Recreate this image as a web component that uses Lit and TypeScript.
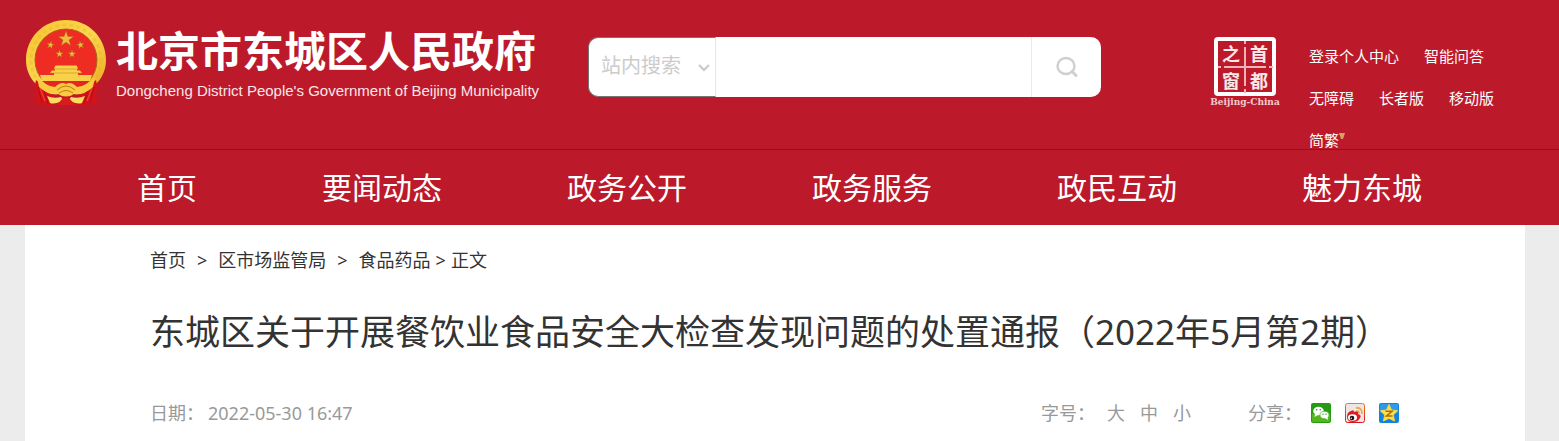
import { LitElement, html, svg, css } from "lit";
import { customElement } from "lit/decorators.js";

const star = (cx: number, cy: number, r: number, turn = 0) => {
  const pts: string[] = [];
  for (let i = 0; i < 10; i++) {
    const rad = i % 2 ? r * 0.4 : r;
    const a = ((-90 + turn + i * 36) * Math.PI) / 180;
    pts.push(`${(cx + rad * Math.cos(a)).toFixed(2)},${(cy + rad * Math.sin(a)).toFixed(2)}`);
  }
  return svg`<polygon points=${pts.join(" ")} />`;
};

@customElement("site-emblem")
export class SiteEmblem extends LitElement {
  static styles = css`
    :host { display: block; flex: none; width: 82px; height: 86px; }
    svg { display: block; width: 100%; height: 100%; }
  `;
  render() {
    return html`<svg viewBox="0 0 82 86" aria-hidden="true">
      <defs>
        <linearGradient id="gold" x1="0" y1="0" x2="1" y2="1">
          <stop offset="0" stop-color="#f6c22f" />
          <stop offset="0.5" stop-color="#fbd850" />
          <stop offset="1" stop-color="#eaa71f" />
        </linearGradient>
      </defs>
      <path d="M41 0 C64 0 81 18 81 40 C81 50 77 58 71 64 L62 74 H20 L11 64 C5 58 1 50 1 40 C1 18 18 0 41 0Z" fill="url(#gold)" />
      <circle cx="41" cy="40" r="35" fill="none" stroke="#e7a51e" stroke-width="3" stroke-dasharray="4 3" opacity="0.25" />
      <path d="M11 60 Q17 66 25 70 L32 86 Q22 87 17 84 Q12 85 9 81 L12 73 L9 70Z" fill="#d3131a" />
      <path d="M71 60 Q65 66 57 70 L50 86 Q60 87 65 84 Q70 85 73 81 L70 73 L73 70Z" fill="#d3131a" />
      <path d="M13 67 L17 83 M69 67 L65 83 M19 70 L23 84 M63 70 L59 84" stroke="#b30e18" stroke-width="1" fill="none" />
      <path d="M15 68 L20 81 M67 68 L62 81" stroke="#f03a2b" stroke-width="1.500" />
      <circle cx="41" cy="40" r="31" fill="#ee2c24" stroke="#a9641a" stroke-width="1" />
      <g fill="#edbd3b" stroke="#a4641a" stroke-width="0.4">
        ${star(41, 19, 8)} ${star(25.5, 25, 4, 12)} ${star(55.5, 25, 4, -12)}
        ${star(34.5, 34, 4)} ${star(47, 34, 4)}
      </g>
      <g fill="#f9d049">
        <path d="M30 46 L31 45.500 H51 L52 46 L53 49 H29Z" />
        <path d="M30 49 H52 V51 H30Z" />
        <path d="M27 50.500 H55 L57 53 H25Z" />
        <path d="M29 53 H53 V56 H29Z" />
        <path d="M15 55 H67 L65 61 H17Z" />
      </g>
      <path d="M29 49 H53 M25 53 H57" stroke="#c98a1f" stroke-width="0.6" />
      <path d="M17 61 H65 L54 69 H28Z" fill="#e4261f" />
      <path d="M12 57 Q20 66 30 67 Q36 61 41 64 Q46 61 52 67 Q62 66 70 57 L68 67 Q58 76 49 74 Q41 79 33 74 Q24 76 14 67Z" fill="#f8cb40" />
      <path d="M32 70 Q41 62 50 70 M34 73 Q41 68 48 73" fill="none" stroke="#bb7b1b" stroke-width="1" />
      <path d="M22 76 Q29 79 36 77 L38 80 Q30 85 25 83Z M60 76 Q53 79 46 77 L44 80 Q52 85 57 83Z" fill="#fbdc62" />
      <path d="M37 79 Q41 76 45 79 L50 85 H32Z" fill="#d81c1c" />
    </svg>`;
  }
}

@customElement("capital-seal")
export class CapitalSeal extends LitElement {
  static styles = css`
    :host { display: block; flex: none; width: 70px; height: 76px; }
    svg { display: block; width: 100%; height: 100%; overflow: visible; }
    .han { font: 700 18px "Noto Sans CJK SC", sans-serif; fill: #fbe9ea; text-anchor: middle; }
    .latin { font: 700 9px "DejaVu Serif", serif; fill: #f3c9cd; text-anchor: middle; }
  `;
  render() {
    return html`<svg viewBox="0 0 70 76" role="img" aria-label="首都之窗">
      <rect x="7" y="4" width="58" height="55" rx="2" fill="none" stroke="#fff" stroke-width="4" />
      <path d="M36 6 V9 M36 12 V51 M36 54 V58 M9 32 H12 M15 32 H57 M60 32 H64" stroke="#eeb4ba" stroke-width="2" />
      <text class="han" x="22" y="26">之</text>
      <text class="han" x="50" y="26">首</text>
      <text class="han" x="22" y="53">窗</text>
      <text class="han" x="50" y="53">都</text>
      <text class="latin" x="36" y="70">Beijing-China</text>
    </svg>`;
  }
}

@customElement("search-bar")
export class SearchBar extends LitElement {
  static styles = css`
    :host { display: block; flex: none; width: 513px; }
    form { display: flex; height: 60px; margin: 0; }
    .scope { position: relative; width: 128px; flex: none; }
    select {
      appearance: none; box-sizing: border-box; width: 100%; height: 100%; margin: 0;
      padding: 0 30px 4px 12px; border: 1px solid #767676; border-right-color: #e6e6e6;
      border-radius: 10px 0 0 10px; background: #fff; color: #ccc;
      font: 20px "Noto Sans", "Noto Sans CJK SC", sans-serif;
    }
    .arrow { position: absolute; right: 6px; top: 26px; width: 12px; height: 9px; pointer-events: none; }
    input {
      flex: 1; min-width: 0; border: 0; padding: 0 12px; background: #fff; outline: 0;
      font: 20px "Noto Sans", "Noto Sans CJK SC", sans-serif;
    }
    button {
      display: flex; align-items: center; justify-content: center; flex: none; width: 70px; padding: 0;
      border: 0; border-left: 1px solid #ebebeb; border-radius: 0 10px 10px 0; background: #fff;
    }
    .glass { width: 22px; height: 22px; }
  `;
  render() {
    return html`<form role="search" @submit=${(e: Event) => e.preventDefault()}>
      <div class="scope">
        <select aria-label="搜索范围"><option>站内搜索</option></select>
        <svg class="arrow" viewBox="0 0 12 9" fill="none" stroke="#c8c8c8" stroke-width="2"><path d="M1 2 L6 7 L11 2" /></svg>
      </div>
      <input type="search" aria-label="搜索关键词" />
      <button type="submit" aria-label="搜索">
        <svg class="glass" viewBox="0 0 22 22" fill="none" stroke="#cfcfcf">
          <ellipse cx="10" cy="10" rx="8.500" ry="8" stroke-width="2.400" />
          <path d="M16 15.500 L20 19.500" stroke-width="3" stroke-linecap="round" />
        </svg>
      </button>
    </form>`;
  }
}

const NAV = ["首页", "要闻动态", "政务公开", "政务服务", "政民互动", "魅力东城"];
const TOOLS = ["登录个人中心", "智能问答", "无障碍", "长者版", "移动版"];

@customElement("app-root")
export class AppRoot extends LitElement {
  static styles = css`
    :host {
      display: block; min-height: 100vh; background: #ececec; color: #333;
      font-family: "Noto Sans", "Noto Sans CJK SC", sans-serif;
    }
    a { color: inherit; text-decoration: none; }
    header { background: #bc1a2b; color: #fff; }
    .top {
      display: flex; align-items: flex-start; height: 149px; box-sizing: border-box;
      padding: 20px 34px 0 25px;
    }
    .brand { display: flex; gap: 9px; flex: none; }
    .names { display: flex; flex-direction: column; padding-top: 7px; white-space: nowrap; }
    .cn { font-size: 42px; line-height: 48px; font-weight: 700; }
    .en { font-family: "Liberation Sans", sans-serif; font-size: 15px; line-height: 32px; color: #fbe6e8; }
    .find { flex: 1; display: flex; padding: 17px 0 0 49px; }
    .side { display: flex; flex: none; gap: 30px; padding-top: 15px; }
    .tools {
      display: flex; flex-wrap: wrap; column-gap: 25px; width: 216px; margin: 0; padding: 0;
      list-style: none; font-size: 15px; line-height: 42px;
    }
    .tools li { display: flex; align-items: center; }
    .caret { width: 6px; height: 6px; margin-bottom: 8px; }
    nav.main { border-top: 1px solid #8f1220; }
    .menu {
      display: flex; justify-content: space-between; margin: 0; padding: 0 137px; list-style: none;
      font-size: 30px; line-height: 75px;
    }
    main { margin: 0 34px 0 25px; padding: 20px 125px 18px; background: #fff; }
    .crumbs { display: flex; gap: 11px; font-size: 18px; line-height: 30px; }
    .tail { display: flex; gap: 5px; }
    h1 { margin: 32px 0 46px; font-size: 35px; line-height: 50px; font-weight: 400; white-space: nowrap; }
    .meta { display: flex; justify-content: space-between; font-size: 18px; line-height: 20px; color: #999; }
    .date, .right, .group, .options { display: flex; }
    .date { gap: 4px; }
    .right { gap: 57px; padding-right: 1px; }
    .group { gap: 12px; }
    .options { gap: 15px; }
    .options button { padding: 0; border: 0; background: none; color: inherit; font: inherit; line-height: 20px; }
    .share { gap: 9px; }
    .share .options { gap: 14px; }
    .share a, .share svg { display: block; width: 20px; height: 20px; }
  `;
  render() {
    return html`
      <header>
        <div class="top">
          <a class="brand" href="#">
            <site-emblem></site-emblem>
            <span class="names">
              <span class="cn">北京市东城区人民政府</span>
              <span class="en">Dongcheng District People's Government of Beijing Municipality</span>
            </span>
          </a>
          <div class="find"><search-bar></search-bar></div>
          <div class="side">
            <capital-seal></capital-seal>
            <ul class="tools">
              ${TOOLS.map((t) => html`<li><a href="#">${t}</a></li>`)}
              <li><a href="#">简繁</a><svg class="caret" viewBox="0 0 6 6"><path d="M0 0 H6 L4 6 H2Z" fill="#d9a066" /></svg></li>
            </ul>
          </div>
        </div>
        <nav class="main"><ul class="menu">${NAV.map((t) => html`<li><a href="#">${t}</a></li>`)}</ul></nav>
      </header>
      <main>
        <nav class="crumbs">
          <a href="#">首页</a><span>&gt;</span><a href="#">区市场监管局</a><span>&gt;</span>
          <span class="tail"><a href="#">食品药品</a><span>&gt;</span><span>正文</span></span>
        </nav>
        <h1>东城区关于开展餐饮业食品安全大检查发现问题的处置通报（2022年5月第2期）</h1>
        <div class="meta">
          <div class="date"><span>日期：</span><time datetime="2022-05-30T16:47">2022-05-30 16:47</time></div>
          <div class="right">
            <div class="group">
              <span>字号：</span>
              <div class="options"><button type="button">大</button><button type="button">中</button><button type="button">小</button></div>
            </div>
            <div class="group share">
              <span>分享：</span>
              <div class="options">
              <a href="#" aria-label="微信"><svg viewBox="0 0 20 20">
                <rect width="20" height="20" rx="2" fill="#239c12" /><path d="M1 11 Q10 8 19 11 V18 Q19 19 18 19 H2 Q1 19 1 18Z" fill="#55b51b" />
                <ellipse cx="7.500" cy="8" rx="5.300" ry="4.300" fill="#fff" /><path d="M4 11 L3.500 14 L7 12Z" fill="#fff" />
                <ellipse cx="13.500" cy="12" rx="4.500" ry="3.700" fill="#fff" stroke="#3fa716" stroke-width="0.7" /><path d="M14 15 L17 17 L16.500 14Z" fill="#fff" />
                <g fill="#239c12"><circle cx="5.700" cy="6.700" r="0.800" /><circle cx="9.300" cy="6.700" r="0.800" /><circle cx="12" cy="11.300" r="0.700" /><circle cx="15" cy="11.300" r="0.700" /></g>
              </svg></a>
              <a href="#" aria-label="微博"><svg viewBox="0 0 20 20">
                <defs><linearGradient id="wb" x1="0" y1="0" x2="0" y2="1"><stop offset="0" stop-color="#f07a24" /><stop offset="1" stop-color="#d9141c" /></linearGradient></defs>
                <rect x="0.500" y="0.500" width="19" height="19" rx="2" fill="#ece6e4" stroke="url(#wb)" />
                <path d="M2 14 Q2 9 6 8 Q9 6 9 9 Q14 7 13 11 Q17 12 15 15 Q13 19 8 19 Q2 19 2 14Z" fill="#df1b25" />
                <ellipse cx="7.500" cy="14.500" rx="4.500" ry="3.300" fill="#fff" /><circle cx="7" cy="15" r="2.300" fill="#161616" /><circle cx="6.300" cy="15.300" r="0.700" fill="#fff" />
                <path d="M11 5 Q17 4 17 11 M11.500 8 Q14 7.500 14.200 10.500" fill="none" stroke="#f4a03a" stroke-width="1.500" />
              </svg></a>
              <a href="#" aria-label="QQ空间"><svg viewBox="0 0 20 20">
                <rect width="20" height="20" rx="2" fill="#1284dc" /><rect x="1" y="1" width="18" height="9" rx="1" fill="#2b9bea" />
                <path d="M10 1.500 L12.500 7 L18.500 7.700 L14.300 12 L15.500 18 L10 15.300 L4.500 18 L5.700 12 L1.500 7.700 L7.500 7Z" fill="#ffe04c" stroke="#fbd53a" stroke-linejoin="round" />
                <path d="M6.500 8.300 H13 L7.500 13 H13.500" fill="none" stroke="#b06a12" stroke-width="1.600" />
              </svg></a>
              </div>
            </div>
          </div>
        </div>
      </main>
    `;
  }
}
